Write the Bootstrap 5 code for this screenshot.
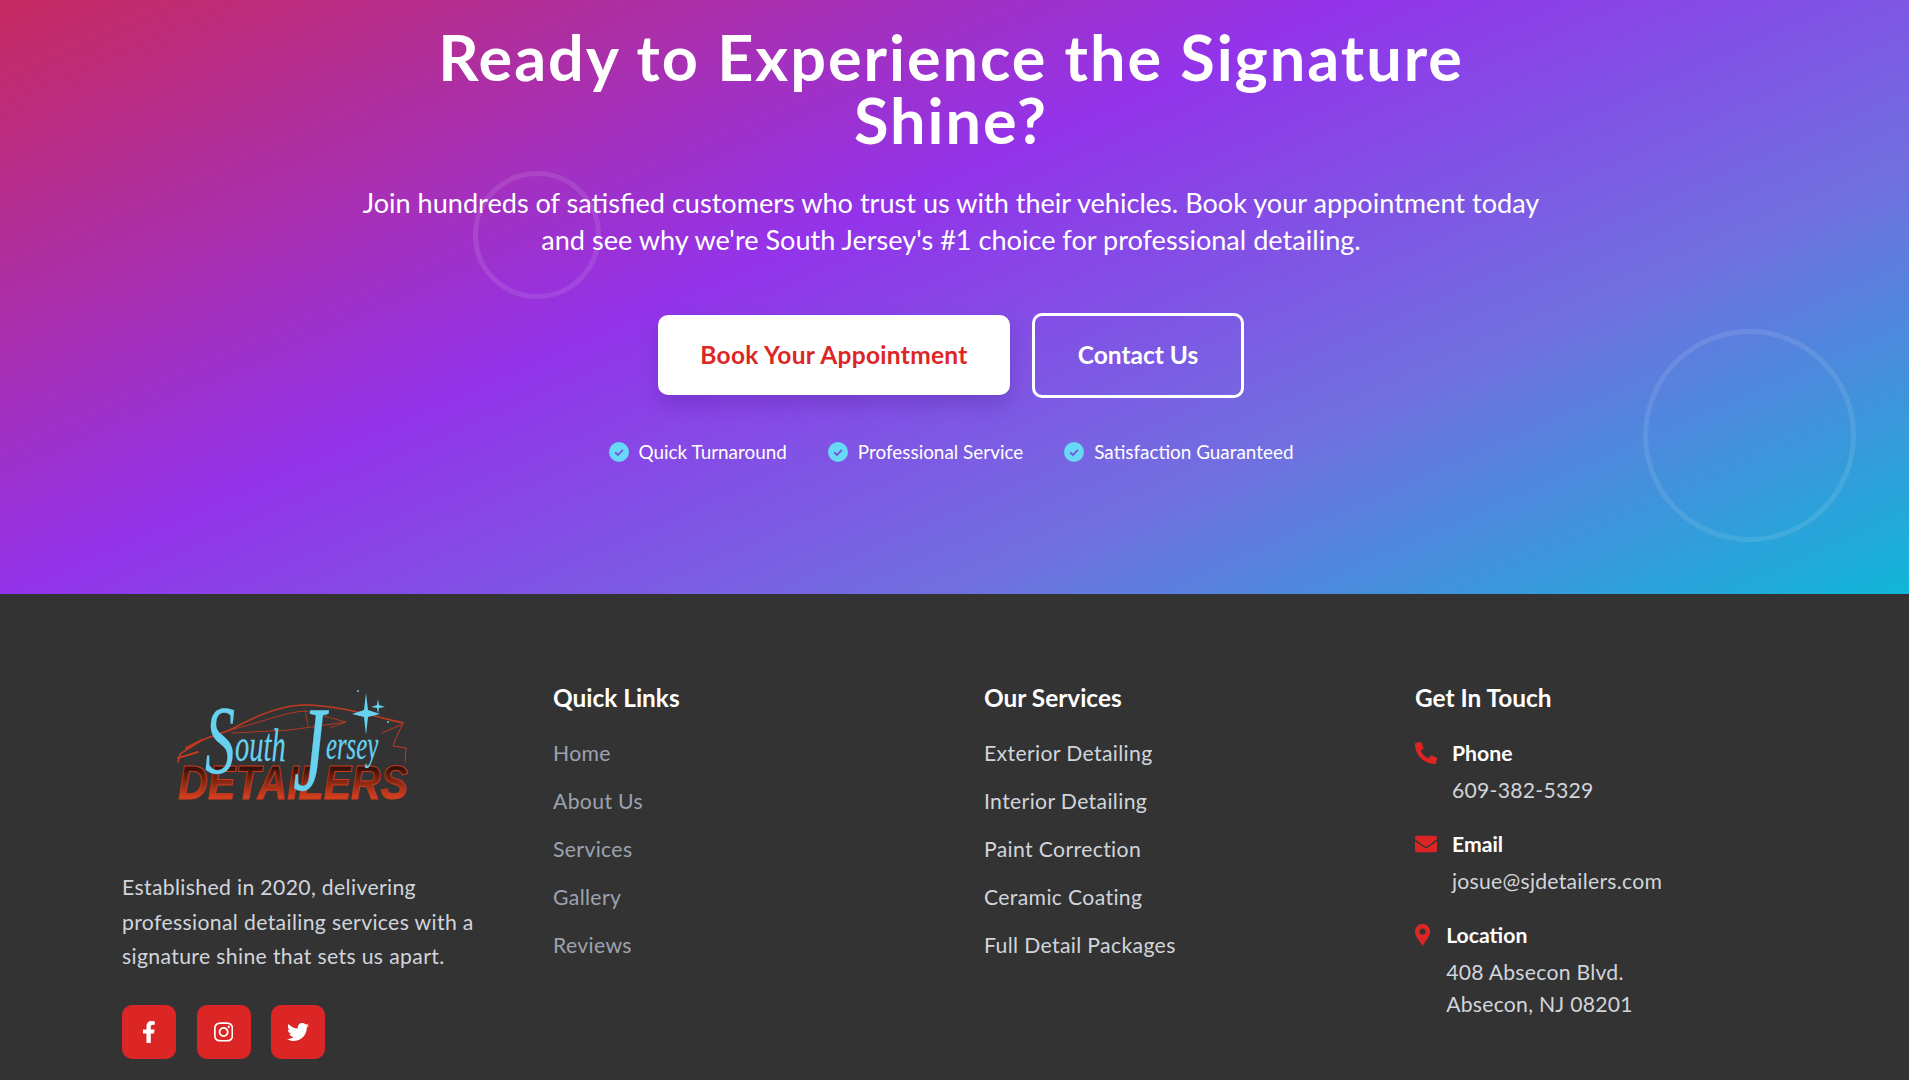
<!DOCTYPE html>
<html lang="en">
<head>
  <meta charset="UTF-8" />
  <meta name="viewport" content="width=device-width, initial-scale=1.0"/>
  <title>South Jersey Detailers</title>
  <link href="https://cdn.jsdelivr.net/npm/bootstrap@5.3.3/dist/css/bootstrap.min.css" rel="stylesheet">
  <style>
    html, body {
      height: 1080px;
      overflow: hidden;
    }

    body {
      font-family: Lato, "Noto Sans", sans-serif;
      background-color: #333333;
    }

    .cta-hero {
      height: 594px;
      padding: 25px 7px 0 0;
      color: white;
      background-image: linear-gradient(to bottom right, #dc2626 0%, #9333ea 50%, #7070e0 75%, #10b6d8 100%);
      background-size: 100% 841px;
      background-position: left bottom;
      overflow: hidden;
    }

    .cta-title {
      font-family: Lato, sans-serif;
      font-size: 63px;
      font-weight: 700;
      letter-spacing: 1.95px;
      line-height: 63.4px;
      width: 1100px;
      margin: 0 auto 32px;
    }

    .cta-text {
      font-size: 27.1px;
      line-height: 37.4px;
      width: 1200px;
      margin: 0 auto 54px;
    }

    .ring {
      border-style: solid;
      border-color: rgba(255, 255, 255, 0.1);
      border-radius: 50%;
      pointer-events: none;
    }

    .ring-small {
      width: 128px;
      height: 128px;
      border-width: 5px;
      left: 473px;
      top: 171px;
    }

    .ring-big {
      width: 213px;
      height: 213px;
      border-width: 5px;
      left: 1643px;
      top: 329px;
    }

    .btn-book, .btn-contact {
      font-size: 24.5px;
      font-weight: 700;
      border-radius: 10px;
      display: flex;
      align-items: center;
      justify-content: center;
    }

    .btn-book {
      width: 352px;
      height: 80px;
      background-color: white;
      color: #dc2626;
      border: none;
      letter-spacing: 0.3px;
      box-shadow: 0 10px 18px rgba(60, 20, 120, 0.22);
    }

    .btn-contact {
      width: 212px;
      height: 85px;
      background: transparent;
      color: white;
      border: 3px solid white;
    }

    .btn-book:hover { background-color: white; color: #dc2626; }
    .btn-contact:hover { color: white; border-color: white; }

    .cta-btns {
      gap: 22px;
    }

    .cta-feats {
      margin-top: 40px;
      gap: 41px;
      font-size: 18.9px;
      line-height: 28px;
    }

    .check-ico {
      width: 20px;
      height: 20px;
      margin-right: 10px;
      flex: none;
    }

    .site-foot {
      padding: 85px 129px 0 122px;
      color: #d1d5db;
      font-size: 21.2px;
      letter-spacing: 0.35px;
    }

    .foot-grid {
      display: grid;
      grid-template-columns: repeat(4, 365px);
      column-gap: 66px;
    }

    .foot-logo {
      display: block;
      width: 260px;
      height: 140px;
      margin: -1px 0 52px 38px;
    }

    .foot-about {
      font-size: 21.2px;
      line-height: 34.6px;
      margin-bottom: 31px;
      width: 365px;
    }

    .social-row {
      gap: 20.5px;
    }

    .social-btn {
      width: 54px;
      height: 54px;
      border-radius: 10px;
      background-color: #dc2626;
      color: white;
    }

    .social-btn svg {
      height: 22px;
      fill: currentColor;
    }

    .foot-head {
      font-family: Lato, sans-serif;
      font-size: 24.4px;
      font-weight: 700;
      letter-spacing: 0;
      line-height: 32px;
      color: white;
      margin: 3px 0 24px;
    }

    .foot-links li {
      line-height: 30px;
      margin-bottom: 18px;
    }

    .foot-links a {
      color: #d1d5db;
      text-decoration: none;
    }

    .foot-links.is-muted a {
      color: #9ca3af;
    }

    .contact-item {
      display: flex;
      margin-bottom: 23px;
      gap: 15px;
    }

    .contact-ico {
      height: 22px;
      margin-top: 4px;
      fill: #dc2626;
      flex: none;
    }

    .contact-ico.is-pin {
      margin-right: 1px;
    }

    .contact-label {
      color: white;
      font-weight: 700;
      letter-spacing: 0;
      line-height: 30px;
      margin-bottom: 6px;
    }

    .contact-value {
      line-height: 32px;
      letter-spacing: 0.25px;
    }

    .script-text {
      font-family: "Liberation Serif", serif;
      font-style: italic;
      fill: #66d2f0;
      stroke: #66d2f0;
      stroke-width: 0.25;
      letter-spacing: 0;
    }

    .plate-text {
      font-family: "Liberation Sans", sans-serif;
      font-weight: 700;
      font-style: italic;
      letter-spacing: 0;
    }
  </style>
</head>
<body>

  <section class="cta-hero position-relative text-center">
    <div class="ring ring-small position-absolute"></div>
    <div class="ring ring-big position-absolute"></div>

    <h1 class="cta-title">Ready to Experience the Signature Shine?</h1>
    <p class="cta-text">Join hundreds of satisfied customers who trust us with their vehicles. Book your appointment today and see why we're South Jersey's #1 choice for professional detailing.</p>

    <div class="cta-btns d-flex justify-content-center align-items-center">
      <a href="#" class="btn btn-book">Book Your Appointment</a>
      <a href="#" class="btn btn-contact">Contact Us</a>
    </div>

    <div class="cta-feats d-flex justify-content-center">
      <div class="d-flex align-items-center">
        <svg class="check-ico" viewBox="0 0 20 20"><circle cx="10" cy="10" r="10" fill="#67d8f5"/><path d="M6.2 10.3l2.7 2.7 5-5.2" fill="none" stroke="#7a4fdc" stroke-width="1.8"/></svg>
        <span>Quick Turnaround</span>
      </div>
      <div class="d-flex align-items-center">
        <svg class="check-ico" viewBox="0 0 20 20"><circle cx="10" cy="10" r="10" fill="#67d8f5"/><path d="M6.2 10.3l2.7 2.7 5-5.2" fill="none" stroke="#7a4fdc" stroke-width="1.8"/></svg>
        <span>Professional Service</span>
      </div>
      <div class="d-flex align-items-center">
        <svg class="check-ico" viewBox="0 0 20 20"><circle cx="10" cy="10" r="10" fill="#67d8f5"/><path d="M6.2 10.3l2.7 2.7 5-5.2" fill="none" stroke="#7a4fdc" stroke-width="1.8"/></svg>
        <span>Satisfaction Guaranteed</span>
      </div>
    </div>
  </section>

  <footer class="site-foot">
    <div class="foot-grid">
      <div>
        <svg class="foot-logo" viewBox="0 0 260 140">
          <defs>
            <linearGradient id="plateFill" x1="0" y1="0" x2="0" y2="1">
              <stop offset="0.2" stop-color="#2c0f0a"/>
              <stop offset="0.5" stop-color="#8a2a14"/>
              <stop offset="0.8" stop-color="#d8401f"/>
            </linearGradient>
          </defs>
          <!-- car outline -->
          <g fill="none" stroke="#c23a20" stroke-linecap="round">
            <path d="M18 84 L20 76 L42 62 L70 52 C95 38 120 27 145 27 C175 27 210 37 243 45" stroke-width="1.6"/>
            <path d="M70 52 C100 45 125 34 145 33 L186 44 L130 52 L72 55" stroke-width="0.9"/>
            <path d="M145 33 L148 48 M186 44 L170 50" stroke-width="0.8"/>
            <path d="M243 45 L236 60 L233 68 L246 70 L245 84" stroke-width="1"/>
            <path d="M18 80 L38 74 M26 70 L42 62" stroke-width="2"/>
            <path d="M222 55 L241 47" stroke-width="1"/>
          </g>
          <text class="plate-text" x="18" y="121" font-size="48" textLength="230" lengthAdjust="spacingAndGlyphs" fill="url(#plateFill)" stroke="#c8391c" stroke-width="1">DETAILERS</text>
          <!-- script name -->
          <text class="script-text" transform="translate(45 95) scale(.62 1)"><tspan font-size="97">S</tspan><tspan font-size="46" dy="-12">outh </tspan><tspan font-size="120" dy="29">J</tspan><tspan font-size="40" dy="-31">ersey</tspan></text>
          <!-- sparkles -->
          <path d="M206 15 L208 32 L220 36 L208 39 L206 57 L204 39 L192 36 L204 32 Z" fill="#66d2f0"/>
          <path d="M218 21 L219 27 L225 29 L219 30 L218 36 L217 30 L211 29 L217 27 Z" fill="#66d2f0"/>
          <circle cx="198" cy="13" r="1" fill="#66d2f0"/>
          <circle cx="228" cy="44" r="1" fill="#66d2f0"/>
        </svg>
        <p class="foot-about">Established in 2020, delivering professional detailing services with a signature shine that sets us apart.</p>
        <div class="social-row d-flex">
          <a href="#" class="social-btn d-flex align-items-center justify-content-center">
            <svg viewBox="0 0 320 512"><path d="M279.14 288l14.22-92.66h-88.91v-60.13c0-25.35 12.42-50.06 52.24-50.06h40.42V6.26S260.43 0 225.36 0c-73.22 0-121.08 44.38-121.08 124.72v70.62H22.89V288h81.39v224h100.17V288z"/></svg>
          </a>
          <a href="#" class="social-btn d-flex align-items-center justify-content-center">
            <svg viewBox="0 0 448 512"><path d="M224.1 141c-63.6 0-114.9 51.3-114.9 114.9s51.3 114.9 114.9 114.9S339 319.5 339 255.9 287.7 141 224.1 141zm0 189.6c-41.1 0-74.7-33.5-74.7-74.7s33.5-74.7 74.7-74.7 74.7 33.5 74.7 74.7-33.6 74.7-74.7 74.7zm146.4-194.3c0 14.9-12 26.8-26.8 26.8-14.9 0-26.8-12-26.8-26.8s12-26.8 26.8-26.8 26.8 12 26.8 26.8zm76.1 27.2c-1.7-35.9-9.9-67.7-36.2-93.9-26.2-26.2-58-34.4-93.9-36.2-37-2.1-147.9-2.1-184.9 0-35.8 1.7-67.6 9.9-93.9 36.1s-34.4 58-36.2 93.9c-2.1 37-2.1 147.9 0 184.9 1.7 35.9 9.9 67.7 36.2 93.9s58 34.4 93.9 36.2c37 2.1 147.9 2.1 184.9 0 35.9-1.7 67.7-9.9 93.9-36.2 26.2-26.2 34.4-58 36.2-93.9 2.1-37 2.1-147.8 0-184.8zM398.8 388c-7.8 19.6-22.9 34.7-42.6 42.6-29.5 11.7-99.5 9-132.1 9s-102.7 2.6-132.1-9c-19.6-7.8-34.7-22.9-42.6-42.6-11.7-29.5-9-99.5-9-132.1s-2.6-102.7 9-132.1c7.8-19.6 22.9-34.7 42.6-42.6 29.5-11.7 99.5-9 132.1-9s102.7-2.6 132.1 9c19.6 7.8 34.7 22.9 42.6 42.6 11.7 29.5 9 99.5 9 132.1s2.7 102.7-9 132.1z"/></svg>
          </a>
          <a href="#" class="social-btn d-flex align-items-center justify-content-center">
            <svg viewBox="0 0 512 512"><path d="M459.37 151.716c.325 4.548.325 9.097.325 13.645 0 138.72-105.583 298.558-298.558 298.558-59.452 0-114.68-17.219-161.137-47.106 8.447.974 16.568 1.299 25.34 1.299 49.055 0 94.213-16.568 130.274-44.832-46.132-.975-84.792-31.188-98.112-72.772 6.498.974 12.995 1.624 19.818 1.624 9.421 0 18.843-1.3 27.614-3.573-48.081-9.747-84.143-51.98-84.143-102.985v-1.299c13.969 7.797 30.214 12.67 47.431 13.319-28.264-18.843-46.781-51.005-46.781-87.391 0-19.492 5.197-37.36 14.294-52.954 51.655 63.675 129.3 105.258 216.365 109.807-1.624-7.797-2.599-15.918-2.599-24.04 0-57.828 46.782-104.934 104.934-104.934 30.213 0 57.502 12.67 76.67 33.137 23.715-4.548 46.456-13.32 66.599-25.34-7.798 24.366-24.366 44.833-46.132 57.827 21.117-2.273 41.584-8.122 60.426-16.243-14.292 20.791-32.161 39.308-52.628 54.253z"/></svg>
          </a>
        </div>
      </div>

      <div>
        <h3 class="foot-head">Quick Links</h3>
        <ul class="foot-links is-muted list-unstyled mb-0">
          <li><a href="#">Home</a></li>
          <li><a href="#">About Us</a></li>
          <li><a href="#">Services</a></li>
          <li><a href="#">Gallery</a></li>
          <li><a href="#">Reviews</a></li>
        </ul>
      </div>

      <div>
        <h3 class="foot-head">Our Services</h3>
        <ul class="foot-links list-unstyled mb-0">
          <li><a href="#">Exterior Detailing</a></li>
          <li><a href="#">Interior Detailing</a></li>
          <li><a href="#">Paint Correction</a></li>
          <li><a href="#">Ceramic Coating</a></li>
          <li><a href="#">Full Detail Packages</a></li>
        </ul>
      </div>

      <div>
        <h3 class="foot-head">Get In Touch</h3>
        <div class="contact-item">
          <svg class="contact-ico" viewBox="0 0 512 512"><path d="M497.39 361.8l-112-48a24 24 0 0 0-28 6.9l-49.6 60.6A370.66 370.66 0 0 1 130.6 204.11l60.6-49.6a23.94 23.94 0 0 0 6.9-28l-48-112A24.16 24.16 0 0 0 122.6.61l-104 24A24 24 0 0 0 0 48c0 256.5 207.9 464 464 464a24 24 0 0 0 23.4-18.6l24-104a24.29 24.29 0 0 0-14.01-27.6z"/></svg>
          <div>
            <div class="contact-label">Phone</div>
            <div class="contact-value">609-382-5329</div>
          </div>
        </div>
        <div class="contact-item">
          <svg class="contact-ico" viewBox="0 0 512 512"><path d="M502.3 190.8c3.9-3.1 9.7-.2 9.7 4.7V400c0 26.5-21.5 48-48 48H48c-26.5 0-48-21.5-48-48V195.6c0-5 5.7-7.8 9.7-4.7 22.4 17.4 52.1 39.5 154.1 113.6 21.1 15.4 56.7 47.8 92.2 47.6 35.7.3 72-32.8 92.3-47.6 102-74.1 131.6-96.3 154-113.7zM256 320c23.2.4 56.6-29.2 73.4-41.4 132.7-96.3 142.8-104.7 173.4-128.7 5.8-4.5 9.2-11.5 9.2-18.9v-19c0-26.5-21.5-48-48-48H48C21.5 64 0 85.5 0 112v19c0 7.4 3.4 14.3 9.2 18.9 30.6 23.9 40.7 32.4 173.4 128.7 16.8 12.2 50.2 41.8 73.4 41.4z"/></svg>
          <div>
            <div class="contact-label">Email</div>
            <div class="contact-value">josue@sjdetailers.com</div>
          </div>
        </div>
        <div class="contact-item">
          <svg class="contact-ico is-pin" viewBox="0 0 352 512"><path d="M172.268 501.67C26.97 291.031 0 255.406 0 176 0 78.798 78.798 0 176 0s176 78.798 176 176c0 79.406-26.97 115.031-172.268 325.67-9.535 13.774-29.93 13.773-39.464 0zM176 249.333c40.5 0 73.333-32.833 73.333-73.333S216.5 102.667 176 102.667 102.667 135.5 102.667 176 135.5 249.333 176 249.333z"/></svg>
          <div>
            <div class="contact-label">Location</div>
            <div class="contact-value">408 Absecon Blvd.<br>Absecon, NJ 08201</div>
          </div>
        </div>
      </div>
    </div>
  </footer>

  <script src="https://cdn.jsdelivr.net/npm/bootstrap@5.3.3/dist/js/bootstrap.bundle.min.js"></script>
</body>
</html>
